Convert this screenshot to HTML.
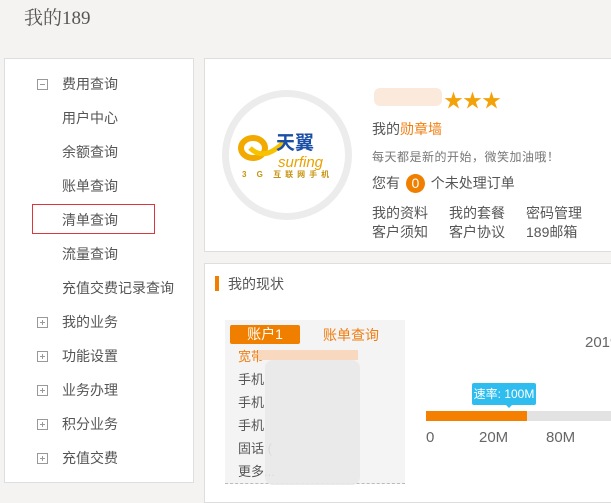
<!DOCTYPE html>
<html><head><meta charset="utf-8"><style>
*{margin:0;padding:0;box-sizing:border-box}
body{width:611px;height:494px;overflow:hidden;background:#f5f3f1;font-family:"Liberation Sans","Microsoft YaHei","Noto Sans CJK SC",sans-serif;color:#555;position:relative;font-size:14px}
.a{position:absolute;white-space:nowrap}
.panel{position:absolute;background:#fff;border:1px solid #dedede}
.mi{position:absolute;left:62px;font-size:14px;color:#555}
.ic{position:absolute;left:37px;width:11px;height:11px;border:1px solid #999}
.ic:before{content:"";position:absolute;left:2px;top:4px;width:5px;height:1px;background:#999}
.plus:after{content:"";position:absolute;left:4px;top:2px;width:1px;height:5px;background:#999}
</style></head><body>
<div class="a" style="left:24px;top:3px;font-family:'Liberation Serif','Noto Serif CJK SC',serif;font-size:19px;color:#555">我的189</div>

<div class="panel" style="left:4px;top:58px;width:190px;height:425px"></div>
<div class="ic" style="top:79px"></div><div class="mi" style="top:74px">费用查询</div>
<div class="mi" style="top:108px">用户中心</div>
<div class="mi" style="top:142px">余额查询</div>
<div class="mi" style="top:176px">账单查询</div>
<div class="a" style="left:32px;top:204px;width:123px;height:30px;border:1px solid #d9383c"></div>
<div class="mi" style="top:210px">清单查询</div>
<div class="mi" style="top:244px">流量查询</div>
<div class="mi" style="top:278px">充值交费记录查询</div>
<div class="ic plus" style="top:317px"></div><div class="mi" style="top:312px">我的业务</div>
<div class="ic plus" style="top:351px"></div><div class="mi" style="top:346px">功能设置</div>
<div class="ic plus" style="top:385px"></div><div class="mi" style="top:380px">业务办理</div>
<div class="ic plus" style="top:419px"></div><div class="mi" style="top:414px">积分业务</div>
<div class="ic plus" style="top:453px"></div><div class="mi" style="top:448px">充值交费</div>

<div class="panel" style="left:204px;top:58px;width:420px;height:194px"></div>
<div class="a" style="left:222px;top:90px;width:130px;height:130px;border-radius:50%;border:7px solid #ececec;background:#fff"></div>
<svg class="a" style="left:236px;top:128px" width="110" height="52" viewBox="0 0 110 52">
<ellipse cx="17" cy="20" rx="12" ry="10" fill="none" stroke="#f2a900" stroke-width="6"/>
<path d="M14 20 q14 14 34 -6" stroke="#f7c300" stroke-width="5" fill="none"/>
<text x="40" y="21" font-size="19" font-weight="bold" fill="#1b4fa6" font-family="Noto Sans CJK SC,sans-serif">天翼</text>
<text x="42" y="39" font-size="15" font-style="italic" fill="#e9a200" font-family="Liberation Sans,sans-serif">surfing</text>
</svg>
<div class="a" style="left:242px;top:169px;font-size:8px;color:#c7930f;letter-spacing:4px;font-weight:bold">3 G 互联网手机</div>
<div class="a" style="left:374px;top:88px;width:68px;height:18px;background:#fbe9dc;border-radius:6px"></div>
<div class="a" style="left:444px;top:86px;font-size:19px;color:#f3a20a;letter-spacing:0px">★★★</div>
<div class="a" style="left:372px;top:119px;font-size:14px">我的<span style="color:#f07f12">勋章墙</span></div>
<div class="a" style="left:372px;top:148px;font-size:12px;color:#777;letter-spacing:.5px">每天都是新的开始，微笑加油哦！</div>
<div class="a" style="left:372px;top:173px;font-size:14px">您有 <span style="display:inline-block;width:19px;height:19px;border-radius:50%;background:#f07f00;color:#fff;text-align:center;line-height:19px;margin:0 2px">0</span> 个未处理订单</div>
<div class="a" style="left:372px;top:204px;font-size:14px;line-height:19px">我的资料</div>
<div class="a" style="left:449px;top:204px;font-size:14px;line-height:19px">我的套餐</div>
<div class="a" style="left:526px;top:204px;font-size:14px;line-height:19px">密码管理</div>
<div class="a" style="left:372px;top:223px;font-size:14px;line-height:19px">客户须知</div>
<div class="a" style="left:449px;top:223px;font-size:14px;line-height:19px">客户协议</div>
<div class="a" style="left:526px;top:223px;font-size:14px;line-height:19px">189邮箱</div>

<div class="panel" style="left:204px;top:263px;width:420px;height:240px"></div>
<div class="a" style="left:215px;top:276px;width:4px;height:15px;background:#f07f00"></div>
<div class="a" style="left:228px;top:274px;font-size:14px">我的现状</div>
<div class="a" style="left:225px;top:320px;width:180px;height:164px;background:#f4f4f4;border-bottom:1px dashed #bbb"></div>
<div class="a" style="left:230px;top:325px;width:70px;height:19px;background:#f07f00;color:#fff;text-align:center;font-size:14px;line-height:19px;border-radius:2px">账户1</div>
<div class="a" style="left:323px;top:325px;font-size:14px;color:#f07f12">账单查询</div>
<div class="a" style="left:238px;top:346px;font-size:13px;color:#f07f12">宽带</div>
<div class="a" style="left:258px;top:350px;width:100px;height:10px;background:#f9d8c0"></div>
<div class="a" style="left:238px;top:369px;font-size:13px">手机</div>
<div class="a" style="left:238px;top:392px;font-size:13px">手机</div>
<div class="a" style="left:238px;top:415px;font-size:13px">手机</div>
<div class="a" style="left:238px;top:438px;font-size:13px">固话 (</div>
<div class="a" style="left:238px;top:461px;font-size:13px">更多...</div>
<div class="a" style="left:265px;top:360px;width:95px;height:125px;background:#e9e9e9;border-radius:8px;opacity:.9"></div>
<div class="a" style="left:585px;top:334px;font-size:15px;color:#666">2019</div>
<div class="a" style="left:472px;top:383px;width:64px;height:22px;background:#2fbdf0;color:#fff;font-size:12px;line-height:22px;text-align:center;border-radius:2px">速率: 100M</div>
<div class="a" style="left:506px;top:405px;width:0;height:0;border:3px solid transparent;border-top-color:#2fbdf0"></div>
<div class="a" style="left:426px;top:411px;width:190px;height:10px;background:#e2e2e2"></div>
<div class="a" style="left:426px;top:411px;width:101px;height:10px;background:#f57f00"></div>
<div class="a" style="left:426px;top:429px;font-size:15px;color:#666">0</div>
<div class="a" style="left:479px;top:429px;font-size:15px;color:#666">20M</div>
<div class="a" style="left:546px;top:429px;font-size:15px;color:#666">80M</div>
</body></html>
